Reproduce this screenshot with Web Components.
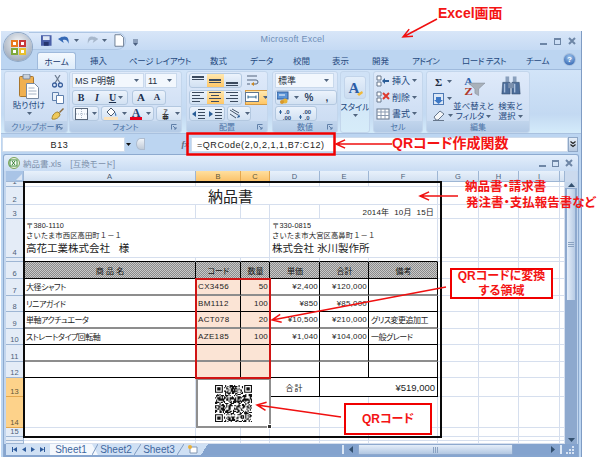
<!DOCTYPE html>
<html lang="ja">
<head>
<meta charset="utf-8">
<title>納品書</title>
<style>
  html, body { margin: 0; background: #fff; }
  body { width: 600px; height: 458px; overflow: hidden; position: relative; font-feature-settings: "palt";
         font-family: "Liberation Sans", "Noto Sans CJK JP", sans-serif; }
</style>
</head>
<body>
<xl-window>
  <xl-titlebar></xl-titlebar>
  <xl-tabs></xl-tabs>
  <xl-ribbon>
    <rb-group label="クリップボード" launcher style="width:64px">
      <rb-clip></rb-clip>
    </rb-group>
    <rb-group label="フォント" launcher style="width:113px;margin-left:1px">
      <rb-row><rb-combo w="72">MS P明朝</rb-combo><rb-combo w="32">11</rb-combo></rb-row>
      <rb-row>
        <rb-seg><rb-btn w="16" txt="b">B</rb-btn><rb-btn w="16" txt="i">I</rb-btn><rb-btn w="22" txt="u" caret>U</rb-btn></rb-seg>
        <rb-seg style="margin-left:4px"><rb-btn w="16" txt="a">A</rb-btn><rb-btn w="16" txt="a2">A</rb-btn></rb-seg>
      </rb-row>
      <rb-row>
        <rb-seg><rb-btn w="25" icon="border" caret></rb-btn></rb-seg>
        <rb-seg style="margin-left:2px"><rb-btn w="26" icon="fill" caret></rb-btn><rb-btn w="25" icon="fontcolor" caret></rb-btn></rb-seg>
        <rb-seg style="margin-left:2px"><rb-btn w="25" icon="ruby" caret></rb-btn></rb-seg>
      </rb-row>
    </rb-group>
    <rb-group label="配置" launcher style="width:82px;margin-left:4px">
      <rb-row>
        <rb-seg><rb-btn w="17" icon="vtop"></rb-btn><rb-btn w="17" icon="vmid" hot></rb-btn><rb-btn w="17" icon="vbot"></rb-btn></rb-seg>
        <rb-btn w="17" icon="wrap" style="margin-left:3px"></rb-btn>
      </rb-row>
      <rb-row>
        <rb-seg><rb-btn w="17" icon="left"></rb-btn><rb-btn w="17" icon="center" hot></rb-btn><rb-btn w="17" icon="right"></rb-btn></rb-seg>
        <rb-btn w="23" icon="merge" caret hot outlined style="margin-left:3px"></rb-btn>
      </rb-row>
      <rb-row>
        <rb-seg><rb-btn w="17" icon="outdent"></rb-btn><rb-btn w="17" icon="indent"></rb-btn></rb-seg>
        <rb-seg style="margin-left:2px"><rb-btn w="22" icon="orient" caret></rb-btn></rb-seg>
      </rb-row>
    </rb-group>
    <rb-group label="数値" launcher style="width:66px;margin-left:4px">
      <rb-row><rb-combo w="60">標準</rb-combo></rb-row>
      <rb-row><rb-seg><rb-btn w="24" icon="money" caret></rb-btn><rb-btn w="18" plain>%</rb-btn><rb-btn w="18" plain>,</rb-btn></rb-seg></rb-row>
      <rb-row><rb-seg><rb-btn w="20" icon="decup"></rb-btn><rb-btn w="20" icon="decdown"></rb-btn></rb-seg></rb-row>
    </rb-group>
    <rb-group label="" tall style="width:30px;margin-left:2px">
      <rb-large></rb-large>
    </rb-group>
    <rb-group label="セル" style="width:50px;margin-left:3px">
      <rb-row><rb-btn w="44" icon="insert" caret txtl>挿入</rb-btn></rb-row>
      <rb-row><rb-btn w="44" icon="remove" caret txtl>削除</rb-btn></rb-row>
      <rb-row><rb-btn w="44" icon="format" caret txtl>書式</rb-btn></rb-row>
    </rb-group>
    <rb-group label="編集" style="width:104px;margin-left:3px">
      <rb-edit></rb-edit>
    </rb-group>
  </xl-ribbon>
  <xl-formula></xl-formula>
  <xl-book></xl-book>
</xl-window>

<xl-notes>
  <xl-note x="438" y="5" size="14">Excel画面</xl-note>
  <xl-note x="392" y="135" size="14">QRコード作成関数</xl-note>
  <xl-note x="465" y="180" size="12.5">納品書・請求書</xl-note>
  <xl-note x="466" y="196" size="12.5">発注書・支払報告書など</xl-note>
  <xl-note x="450" y="268" w="103" h="31" size="12" box>QRコードに変換<br>する領域</xl-note>
  <xl-note x="344" y="403" w="88" h="32" size="12" box>QRコード</xl-note>
</xl-notes>

<script>
'use strict';

const rects = list => list.map(r => `<rect x="${r[0]}" y="${r[1]}" width="${r[2]}" height="${r[3]}"/>`).join('');

const hLines = (rows) => `<g fill="#3b4a5e">${rects(rows)}</g>`;

const ICONS = {
  vtop: [14, 12, hLines([[1,1,12,2],[1,4,12,1]])],
  vmid: [14, 12, hLines([[1,4,12,2],[1,7,12,1]])],
  vbot: [14, 12, hLines([[1,7,12,2],[1,10,12,1]])],
  left: [14, 12, hLines([[1,1,12,1],[1,4,8,1],[1,7,12,1],[1,10,8,1]])],
  center: [14, 12, hLines([[1,1,12,1],[3,4,8,1],[1,7,12,1],[3,10,8,1]])],
  right: [14, 12, hLines([[1,1,12,1],[5,4,8,1],[1,7,12,1],[5,10,8,1]])],
  wrap: [15, 13, `<path d="M2 2h10M2 6h9a2 2 0 0 1 0 4H8M2 10h3" fill="none" stroke="#55657c"/><path d="M9 8v4l-3-2z" fill="#c9851e"/>`],
  merge: [14, 12, `<rect x=".5" y="1.5" width="13" height="9" fill="#fff" stroke="#5f7590"/><path d="M3 6h8" stroke="#27628f"/><path d="M3 4.5v3M11 4.5v3" stroke="#27628f"/>`],
  outdent: [14, 12, hLines([[7,1,7,1],[7,4,7,1],[7,7,7,1],[7,10,7,1]]) + `<path d="M5 3v6L1 6z" fill="#2a5d97"/>`],
  indent: [14, 12, hLines([[7,1,7,1],[7,4,7,1],[7,7,7,1],[7,10,7,1]]) + `<path d="M1 3v6l4-3z" fill="#2a5d97"/>`],
  orient: [13, 12, `<path d="M2 2l8 5M2 6l6 4M4 1l7 4" stroke="#44546a" fill="none"/><path d="M9 10l3-1-1-3z" fill="#2a5d97"/>`],
  border: [13, 12, `<rect x=".5" y=".5" width="12" height="11" fill="#f8fbff" stroke="#59677a"/><path d="M6.5 1v10M1 6h11" stroke="#a9b6c6" stroke-dasharray="1 1"/>`],
  fill: [14, 13, `<path d="M3 5l4-4 4 4-4 4z" fill="#fff" stroke="#4b5a70"/><path d="M11 5c1 2 2 3 1 4-1 0-1-2-1-4z" fill="#2f6db0"/><rect x="0" y="10" width="14" height="3" fill="#fbe3bd"/>`],
  fontcolor: [12, 13, `<text x="6" y="9.5" text-anchor="middle" font-family="Liberation Serif" font-weight="700" font-size="12" fill="#1f3f75">A</text><rect x="0" y="10" width="12" height="3" fill="#e8001c"/>`],
  ruby: [11, 12, `<text x="5.5" y="4.5" text-anchor="middle" font-size="4.5" font-weight="700" fill="#333">ア</text><text x="5.5" y="11.5" text-anchor="middle" font-size="7" font-weight="700" fill="#222">亜</text>`],
  money: [13, 13, `<rect x="0" y="1" width="11" height="7" fill="#5c94d6" stroke="#335f9b"/><path d="M2 4h6" stroke="#fff"/><circle cx="8" cy="10" r="2.5" fill="#e7b43a"/><circle cx="5" cy="11" r="2" fill="#d9982a"/>`],
  decup: [15, 12, `<text x="9" y="6" font-size="6" font-weight="700" fill="#2d4a75" text-anchor="middle">.0</text><text x="9" y="12" font-size="6" font-weight="700" fill="#2d4a75" text-anchor="middle">.00</text><path d="M1 4h3M2.5 2v4" stroke="#2a5d97"/>`],
  decdown: [15, 12, `<text x="9" y="6" font-size="6" font-weight="700" fill="#2d4a75" text-anchor="middle">.00</text><text x="9" y="12" font-size="6" font-weight="700" fill="#2d4a75" text-anchor="middle">.0</text><path d="M1 9h3M2.5 7v4" stroke="#2a5d97"/>`],
  insert: [14, 12, `<path d="M1 1h4v4H1zM1 7h4v4H1z" fill="#fff" stroke="#66768c"/><path d="M7 6h6" stroke="#2a5d97" stroke-width="2"/><path d="M9 3l-3 3 3 3z" fill="#2a5d97"/>`],
  remove: [14, 12, `<path d="M1 1h4v4H1zM1 7h4v4H1z" fill="#fff" stroke="#66768c"/><path d="M7 2l6 6M13 2l-6 6" stroke="#dd3a2e" stroke-width="2"/>`],
  format: [14, 12, `<rect x="1" y="1" width="12" height="10" fill="#fff" stroke="#66768c"/><path d="M1 4h12M1 7.5h12M5 1v10M9 1v10" stroke="#8b9ab0"/>`]
};

function iconSvg(name) {
  const ic = ICONS[name];
  return `<svg width="${ic[0]}" height="${ic[1]}" viewBox="0 0 ${ic[0]} ${ic[1]}" style="display:block;flex:none">${ic[2]}</svg>`;
}

const CARET = `<svg width="5" height="3" viewBox="0 0 5 3" style="flex:none;display:block"><path d="M0 0h5L2.5 3z" fill="#51657f"/></svg>`;

class XlWindow extends HTMLElement {
    constructor() {
        super();
        this.attachShadow({mode: 'open'});
        this.shadowRoot.innerHTML = `
        <style>
        :host { display: block; width: 580px; height: 426px; margin: 31px 0 0 1px;
                background: #bcd5f1; border-right: 1px solid #7f9cc4; color: #15396e; }
        </style>
        <slot></slot>`;
    }
}

class XlTitlebar extends HTMLElement {
    constructor() {
        super();
        this.attachShadow({mode: 'open'});
        this.shadowRoot.innerHTML = `
        <style>
        :host { display: flex; align-items: center; height: 19px; position: relative;
                background: linear-gradient(#d8e6f8, #c5daf4); }
        .orb { position: absolute; left: 3px; top: 2px; width: 28px; height: 28px; border-radius: 50%;
               background: radial-gradient(circle at 50% 35%, #f5f7fa, #aab4c2 70%, #7b8797);
               box-shadow: 0 0 0 1px #8ea6c4; display: flex; align-items: center; justify-content: center; z-index: 2; }
        .qat { margin-left: 28px; width: 97px; height: 18px; display: flex; align-items: center; padding-left: 12px; box-sizing: border-box;
               gap: 4px; background: linear-gradient(#dfeafa, #c7dbf4); border: 1px solid #aec6e4; border-left: 0; border-radius: 0 9px 9px 0; }
        .more { margin-left: 7px; }
        .title { position: absolute; left: 0; right: 0; top: 3px; text-align: center; font-size: 9px; color: #6f8fb8; letter-spacing: .2px; padding-left: 3px; }
        </style>
        <div class="orb">
          <svg width="17" height="17" viewBox="0 0 17 17">
            <path d="M1 1h7v7H1z" fill="#e9791e"/><path d="M3 3h3v3H3z" fill="#fff"/>
            <path d="M9 1h7v7H9z" fill="#c8383a"/><path d="M1 9h7v7H1z" fill="#7fa93a"/><path d="M9 9h7v7H9z" fill="#e8c02e"/>
            <path d="M3 11h3v3H3zM11 3h3v3h-3zM11 11h3v3h-3z" fill="#fff"/>
          </svg>
        </div>
        <div class="qat">
          <svg width="11" height="11" viewBox="0 0 11 11"><rect width="11" height="11" fill="#4a5fa8"/><rect x="2" y="1" width="7" height="4" fill="#dfe7f5"/><rect x="3" y="7" width="5" height="4" fill="#26366f"/></svg>
          <svg width="13" height="11" viewBox="0 0 13 11" style="margin-left:2px"><path d="M4 2c5-2 8 1 7 7-1-4-3-5-6-4l1 3-6-4 5-3z" fill="#3569b5"/></svg>
          ${CARET}
          <svg width="13" height="11" viewBox="0 0 13 11" style="margin-left:3px"><path d="M9 2C4 0 1 3 2 9c1-4 3-5 6-4L7 8l6-4-5-3z" fill="#a7b7cb"/></svg>
          ${CARET}
          <svg width="11" height="13" viewBox="0 0 11 13" style="margin-left:3px"><path d="M1 .5h6l3 3v9H1z" fill="#fff" stroke="#6d7c92"/></svg>
        </div>
        <div class="more"><svg width="5" height="7" viewBox="0 0 5 7"><path d="M0 1h5M0 3h5" stroke="#4a5f80"/><path d="M0 4h5L2.5 7z" fill="#4a5f80"/></svg></div>
        <div class="title">Microsoft Excel</div>
        <xl-controls></xl-controls>`;
    }
}

class XlControls extends HTMLElement {
    constructor() {
        super();
        this.attachShadow({mode: 'open'});
        this.shadowRoot.innerHTML = `
        <style>:host { display: flex; gap: 7px; padding-right: 5px; margin-left: auto; align-items: center; }</style>
        <svg width="7" height="8" viewBox="0 0 7 8"><rect y="6" width="7" height="2" fill="#6e86a6"/></svg>
        <svg width="7" height="8" viewBox="0 0 7 8"><rect x=".5" y="1.5" width="6" height="6" fill="none" stroke="#6e86a6"/><rect y="1" width="7" height="2" fill="#6e86a6"/></svg>
        <svg width="8" height="8" viewBox="0 0 8 8"><path d="M1 1l6 6M7 1L1 7" stroke="#6e86a6" stroke-width="2"/></svg>`;
    }
}

class XlTabs extends HTMLElement {
    constructor() {
        super();
        this.attachShadow({mode: 'open'});
        // name, column width up to the next tab, letter spacing
        const names = [['挿入', 39, 0], ['ページ レイアウト', 81, -.3], ['数式', 40, 0], ['データ', 43, -.2], ['校閲', 39, 0],
                       ['表示', 40, 0], ['開発', 40, 0], ['アドイン', 50, -.6], ['ロード テスト', 64, -.5], ['チーム', 24, -.2]];
        this.shadowRoot.innerHTML = `
        <style>
        :host { display: flex; height: 19px; align-items: center; box-sizing: border-box; padding-left: 36px;
                font-size: 8.5px; color: #25497e; background: #bcd5f1; }
        .on { width: 39px; height: 17px; margin-top: 2px; display: flex; align-items: center; justify-content: center;
              background: linear-gradient(#f4f9fe, #dcebfa); border: 1px solid #9fbadc; border-bottom: 0; border-radius: 3px 3px 0 0;
              box-sizing: border-box; color: #15396e; }
        .tabs { display: flex; margin-left: 14px; white-space: nowrap; }
        .help { position: absolute; left: 564px; width: 11px; height: 11px; border-radius: 50%; margin-top: -1px; color: #fff; text-align: center;
                font: 700 8px/11px "Liberation Sans", sans-serif; background: radial-gradient(circle at 50% 30%, #9cc4ee, #2659a8); box-shadow: 0 0 0 1px #a7bedb; }
        </style>
        <div class="on">ホーム</div>
        <div class="tabs">${names.map(n => `<span style="width:${n[1]}px;letter-spacing:${n[2]}px">${n[0]}</span>`).join('')}</div>
        <div class="help">?</div>`;
    }
}

class XlRibbon extends HTMLElement {
    constructor() {
        super();
        this.attachShadow({mode: 'open'});
        this.shadowRoot.innerHTML = `
        <style>
        :host { display: flex; height: 65px; box-sizing: border-box; padding: 1px 0 1px 3px;
                background: linear-gradient(#d2e4f8, #c3d9f2 70%, #d4ebfa); border-top: 1px solid #9fbadc; border-bottom: 1px solid #a9c1df; }
        </style>
        <slot></slot>`;
    }
}

class RbGroup extends HTMLElement {
    constructor() {
        super();
        this.attachShadow({mode: 'open'});
    }
    connectedCallback() {
        const launcher = this.hasAttribute('launcher') ? `<svg class="ln" width="6" height="6" viewBox="0 0 6 6"><path d="M.5 5.5v-5h5M2 2l3 3M3 5h2V3" fill="none" stroke="#5f7fa8"/></svg>` : '';
        this.shadowRoot.innerHTML = `
        <style>
        :host { display: flex; flex-direction: column; flex: none; box-sizing: border-box; height: 62px; border-radius: 3px;
                border: 1px solid #c3d6ec; background: linear-gradient(#dfeafa, #c8daf1); overflow: hidden; }
        :host([tall]) { background: linear-gradient(#cfe1f6, #d6ecf9); }
        .body { flex: 1; padding: 1px 2px 0; min-height: 0; }
        .lab { height: 11px; flex: none; display: flex; align-items: center; justify-content: center; position: relative; font-size: 8px;
               color: #4b72a6; background: linear-gradient(#c1d5ec, #b3cae6); }
        :host([tall]) .lab { background: none; }
        .ln { position: absolute; right: 4px; top: 3px; }
        </style>
        <div class="body"><slot></slot></div>
        <div class="lab">${this.getAttribute('label')}${launcher}</div>`;
    }
}

class RbRow extends HTMLElement {
    constructor() {
        super();
        this.attachShadow({mode: 'open'});
        this.shadowRoot.innerHTML = `
        <style>:host { display: flex; align-items: center; height: 15px; margin-bottom: 1.5px; }</style>
        <slot></slot>`;
    }
}

class RbSeg extends HTMLElement {
    constructor() {
        super();
        this.attachShadow({mode: 'open'});
        this.shadowRoot.innerHTML = `
        <style>
        :host { display: inline-flex; height: 15px; box-sizing: border-box; border: 1px solid #b3c8e0; border-radius: 3px;
                background: linear-gradient(#ecf3fc, #d2e1f2); }
        </style>
        <slot></slot>`;
    }
}

class RbCombo extends HTMLElement {
    constructor() {
        super();
        this.attachShadow({mode: 'open'});
    }
    connectedCallback() {
        this.shadowRoot.innerHTML = `
        <style>
        :host { display: inline-flex; align-items: center; justify-content: space-between; height: 15px; box-sizing: border-box;
                width: ${this.getAttribute('w')}px; margin-right: 1px; padding: 0 4px 0 2px; background: #f2f7fd; border: 1px solid #c9d9ec;
                font-size: 9px; color: #26303f; }
        </style>
        <span><slot></slot></span>${CARET}`;
    }
}

class RbBtn extends HTMLElement {
    constructor() {
        super();
        this.attachShadow({mode: 'open'});
    }
    connectedCallback() {
        const w = this.getAttribute('w');
        const txt = this.getAttribute('txt');
        const fontFor = {
            b: '700 10px "Liberation Serif"', i: 'italic 700 10px "Liberation Serif"', u: '700 10px "Liberation Serif"',
            a: '700 11px "Liberation Serif"', a2: '700 9px "Liberation Serif"'
        };
        this.shadowRoot.innerHTML = `
        <style>
        :host { display: inline-flex; align-items: center; justify-content: center; gap: 2px; flex: none; box-sizing: border-box;
                width: ${w}px; height: 100%; color: #1c2f4d; white-space: nowrap; font: ${fontFor[txt] || '8px "Liberation Sans", "Noto Sans CJK JP", sans-serif'}; }
        :host([hot]) { background: linear-gradient(#ffe8b0, #ffc766); }
        :host([outlined]) { border: 1px solid #d69b45; height: 15px; }
        :host([plain]) { font: 700 10px "Liberation Sans", sans-serif; color: #2c3f5c; }
        :host([txt="u"]) span { text-decoration: underline; }
        :host([txtl]) { justify-content: flex-start; color: #25497e; font-size: 9px; }
        </style>
        ${this.hasAttribute('icon') ? iconSvg(this.getAttribute('icon')) : ''}<span><slot></slot></span>${this.hasAttribute('caret') ? CARET : ''}`;
    }
}

class RbClip extends HTMLElement {
    constructor() {
        super();
        this.attachShadow({mode: 'open'});
        this.shadowRoot.innerHTML = `
        <style>
        :host { display: flex; height: 49px; font-size: 8px; color: #25497e; }
        .big { width: 44px; display: flex; flex-direction: column; align-items: center; }
        .side { display: flex; flex-direction: column; align-items: center; gap: 4px; padding-top: 2px; }
        .lab { font-size: 8.5px; line-height: 10px; margin-top: 1px; white-space: nowrap; }
        </style>
        <div class="big">
          <svg width="20" height="25" viewBox="0 0 20 25" style="margin-top:1px">
            <rect x=".5" y="2.5" width="14" height="20" rx="1" fill="#f0b050" stroke="#a9762c"/>
            <rect x="4" y="0" width="7" height="5" rx="1" fill="#c7d0db" stroke="#77859a"/>
            <path d="M7.5 9.5h8l4 4v11h-12z" fill="#fff" stroke="#788aa2"/>
            <path d="M9.5 14h6M9.5 17h8M9.5 20h8" stroke="#a5b3c5"/>
          </svg>
          <div class="lab">貼り付け</div>
          <div style="margin-top:2px">${CARET}</div>
        </div>
        <div class="side">
          <svg width="11" height="13" viewBox="0 0 11 13"><path d="M3 0l5 8M8 0L3 8" stroke="#6d7b8f" stroke-width="1.2"/><circle cx="2.5" cy="10" r="2" fill="none" stroke="#3a5f9c" stroke-width="1.3"/><circle cx="8.5" cy="10" r="2" fill="none" stroke="#3a5f9c" stroke-width="1.3"/></svg>
          <svg width="12" height="12" viewBox="0 0 12 12"><path d="M.5.5h6v8h-6z" fill="#e6eef8" stroke="#5f80ad"/><path d="M4.5 3.5h7v8h-7z" fill="#fff" stroke="#5f80ad"/></svg>
          <svg width="13" height="12" viewBox="0 0 13 12"><path d="M8 4l4-4 1 1-4 4z" fill="#8a6a3c"/><path d="M1 11c0-4 3-7 6-7l2 2c0 3-4 6-8 5z" fill="#eec95b" stroke="#a58531"/></svg>
        </div>`;
    }
}

class RbLarge extends HTMLElement {
    constructor() {
        super();
        this.attachShadow({mode: 'open'});
        this.shadowRoot.innerHTML = `
        <style>
        :host { display: flex; flex-direction: column; align-items: center; font-size: 9px; color: #25497e; white-space: nowrap; }
        .ic { width: 22px; height: 23px; margin-top: 3px; border-radius: 3px; border: 1px solid #c2d4ea; display: flex; align-items: center; justify-content: center;
              background: linear-gradient(#e5effa, #cbdcf0); box-sizing: border-box; }
        .t { margin-top: 3px; line-height: 10px; font-size: 8.5px; letter-spacing: -.2px; }
        </style>
        <div class="ic">
          <svg width="16" height="16" viewBox="0 0 16 16"><text x="7" y="13" text-anchor="middle" font-family="Liberation Serif" font-weight="700" font-size="15" fill="#2c5da6">A</text><path d="M10 14l5-3 1 2-4 3z" fill="#f0b93a"/></svg>
        </div>
        <div class="t">スタイル</div>
        <div style="margin-top:2px">${CARET}</div>`;
    }
}

class RbEdit extends HTMLElement {
    constructor() {
        super();
        this.attachShadow({mode: 'open'});
        this.shadowRoot.innerHTML = `
        <style>
        :host { display: flex; height: 49px; font-size: 8.5px; color: #25497e; }
        .col { width: 26px; padding-left: 4px; display: flex; flex-direction: column; gap: 4px; padding-top: 2px; box-sizing: border-box; flex: none; }
        .r { display: flex; align-items: center; gap: 3px; height: 13px; }
        .big { width: 37px; flex: none; display: flex; flex-direction: column; align-items: center; line-height: 10px; white-space: nowrap; text-align: center; }
        .line1 { margin-top: 4px; }
        .line2 { display: flex; align-items: center; gap: 2px; }
        svg { display: block; flex: none; }
        </style>
        <div class="col">
          <div class="r"><span style="font:700 11px 'Liberation Serif',serif;color:#1d2c44;width:11px;text-align:center">Σ</span>${CARET}</div>
          <div class="r"><svg width="11" height="12" viewBox="0 0 11 12"><rect x=".5" y=".5" width="10" height="11" fill="#dbe7f6" stroke="#4d79b4"/><path d="M3 4h5v3h2l-4.5 4L1 7h2z" fill="#3c78c6"/></svg>${CARET}</div>
          <div class="r"><svg width="12" height="11" viewBox="0 0 12 11"><path d="M1 7l6-6 4 3-6 6H3z" fill="#f4f6f9" stroke="#67778c"/><path d="M0 10.5h11" stroke="#67778c"/></svg>${CARET}</div>
        </div>
        <div class="big">
          <svg width="22" height="22" viewBox="0 0 24 30" preserveAspectRatio="none" style="margin-top:2px">
            <text x="6" y="13" text-anchor="middle" font-family="Liberation Serif" font-weight="700" font-size="13" fill="#2d63ad">A</text>
            <text x="6" y="27" text-anchor="middle" font-family="Liberation Serif" font-weight="700" font-size="14" fill="#b13a2c">Z</text>
            <path d="M6 11h18l-7 8v9l-4-3v-6z" fill="#a9b1ba" stroke="#7c8794" stroke-width=".6"/>
          </svg>
          <div class="line1">並べ替えと</div>
          <div class="line2">フィルタ${CARET}</div>
        </div>
        <div class="big">
          <svg width="22" height="22" viewBox="0 0 24 30" preserveAspectRatio="none" style="margin-top:2px">
            <rect x="6" y="2" width="4" height="8" fill="#8aa0bd"/><rect x="14" y="2" width="4" height="8" fill="#8aa0bd"/>
            <path d="M3 10h8v16H2zM13 10h8l1 16h-9z" fill="#4c6d9a" stroke="#2f4767" stroke-width=".6"/>
            <rect x="9" y="11" width="6" height="7" fill="#7b90ad"/><path d="M5 12v12M16 12v12" stroke="#a9bfdc" stroke-width="1.5"/>
          </svg>
          <div class="line1">検索と</div>
          <div class="line2">選択${CARET}</div>
        </div>`;
    }
}

class XlFormula extends HTMLElement {
    constructor() {
        super();
        this.attachShadow({mode: 'open'});
        this.shadowRoot.innerHTML = `
        <style>
        :host { display: flex; align-items: stretch; height: 15px; margin: 3px 0 2px 1px; font-size: 9px; color: #222; }
        .name { width: 123px; background: #fff; border: 1px solid #cfdcec; box-sizing: border-box; display: flex; align-items: center; justify-content: center; letter-spacing: .6px; padding-right: 8px; }
        .drop { width: 6px; display: flex; align-items: center; padding-left: 1px; margin-right: 2px; }
        .round { width: 9px; height: 12px; margin: 1px 0 0 2px; border-radius: 50% 0 0 50%; background: linear-gradient(#f0f4f9, #c1cbd8); border: 1px solid #aebccf; box-sizing: border-box; }
        .fx { width: 46px; text-align: right; padding-right: 2px; box-sizing: border-box; font: italic 700 9px/14px "Liberation Serif", serif; color: #5d6c80; }
        .input { flex: 1; background: #fff; border: 1px solid #cfdcec; box-sizing: border-box; display: flex; align-items: center; padding-left: 5px; letter-spacing: .55px; white-space: nowrap; }
        .exp { width: 10px; margin-right: 3px; border: 1px solid #8fa7c6; box-sizing: border-box; background: linear-gradient(#e6eef8, #b7c9e0); display: flex; align-items: center; justify-content: center; }
        </style>
        <div class="name">B13</div>
        <div class="drop"><svg width="5" height="3" viewBox="0 0 5 3"><path d="M0 0h5L2.5 3z" fill="#111"/></svg></div>
        <div class="round"></div>
        <div class="fx">fx</div>
        <div class="input">=QRCode(2,0,2,1,1,B7:C12)</div>
        <div class="exp"><svg width="6" height="8" viewBox="0 0 6 8"><path d="M.5 .5l2.5 2 2.5-2M.5 3.5l2.5 2 2.5-2" fill="none" stroke="#222" stroke-width="1.2"/></svg></div>`;
    }
}

class XlBook extends HTMLElement {
    constructor() {
        super();
        this.attachShadow({mode: 'open'});
        this.shadowRoot.innerHTML = `
        <style>
        :host { display: block; margin-left: 2px; width: 576px; height: 303px; box-sizing: border-box; border: 1px solid #8daacf; border-bottom: 0;
                border-radius: 3px 3px 0 0; background: #86a5cf; overflow: hidden; }
        .top { display: flex; align-items: center; height: 16px; padding-left: 4px; background: linear-gradient(#e3eefb, #c9dcf3); font-size: 8.5px; color: #7d90ab; gap: 3px; }
        .nm { display: flex; gap: 9px; white-space: nowrap; }
        .main { display: flex; padding-left: 2px; background: #c3d6ee; }
        .bottom { display: flex; height: 13px; padding-left: 2px; }
        </style>
        <div class="top">
          <svg width="12" height="12" viewBox="0 0 12 12"><circle cx="6" cy="6" r="5.5" fill="#e9f3e0" stroke="#7da25c"/><rect x="2" y="3" width="7" height="6" fill="#fff" stroke="#3d8a3b"/><path d="M4 4l3 4M7 4L4 8" stroke="#2f7a2d"/></svg>
          <div class="nm"><span>納品書.xls</span><span>[互換モード]</span></div>
          <xl-controls style="padding-right:5px;gap:6px"></xl-controls>
        </div>
        <div class="main"><xl-sheet></xl-sheet><xl-vscroll></xl-vscroll></div>
        <div class="bottom"><xl-sheettabs></xl-sheettabs><xl-hscroll></xl-hscroll></div>`;
    }
}

const ROW_H = [5, 18, 14, 39, 4, 17, 17, 16, 17, 16, 17, 16, 19, 31, 9, 4, 3];
const COL_W = [172, 45, 29, 50, 49, 69, 41, 40, 41, 5];
const GRID = '#d6dfee';

// placed cells: [row, col, rowspan, colspan, text, class]
const PLACED = [
    [2, 1, 1, 6, '納品書', 'ttl'],
    [3, 5, 1, 2, '2014年&nbsp; 10月&nbsp; 15日', 'date'],
    [4, 1, 1, 3, '<div class="addr">〒380-1110</div><div class="addr">さいたま市西区高田町１－１</div><div class="nm">高花工業株式会社&nbsp;&nbsp;&nbsp;様</div>', 'adr'],
    [4, 4, 1, 3, '<div class="addr">〒330-0815</div><div class="addr">さいたま市大宮区高鼻町１－１</div><div class="nm">株式会社 氷川製作所</div>', 'adr'],
    [13, 1, 2, 1, '', 'b'],
    [13, 2, 2, 2, '<xl-qr></xl-qr>', 'qr'],
    [13, 4, 1, 1, '合計', 'tot'],
    [13, 5, 1, 2, '¥519,000', 'sum']
];

const TABLE = [
    ['商 品 名', 'コード', '数量', '単価', '合計', '備考'],
    ['大径シャフト', 'CX3456', '50', '¥2,400', '¥120,000', ''],
    ['リニアガイド', 'BM1112', '100', '¥850', '¥85,000', ''],
    ['単軸アクチュエータ', 'ACT078', '20', '¥10,500', '¥210,000', 'グリス変更追加工'],
    ['ストレートタイプ回転軸', 'AZE185', '100', '¥1,040', '¥104,000', '一般グレード'],
    ['', '', '', '', '', ''],
    ['', '', '', '', '', '']
];

class XlSheet extends HTMLElement {
    constructor() {
        super();
        this.attachShadow({mode: 'open'});
    }
    connectedCallback() {
        let html = `<div class="corner"><svg width="6" height="6" viewBox="0 0 6 6" style="position:absolute;right:1px;bottom:1px"><path d="M6 0v6H0z" fill="#dbe6f4"/></svg></div>`;
        const letters = 'ABCDEFGHI ';
        COL_W.forEach((w, i) => {
            const sel = i === 1 || i === 2 ? ' sel' : '';
            html += `<div class="ch${sel}" style="grid-row:1;grid-column:${i + 2}">${letters[i]}</div>`;
        });
        ROW_H.forEach((h, i) => {
            const r = i + 1;
            const sel = r === 13 || r === 14 ? ' sel' : '';
            html += `<div class="rh${sel}" style="grid-row:${r + 1};grid-column:1">${r < 16 && h > 4 ? r : ''}</div>`;
        });
        const taken = {};
        PLACED.forEach(p => {
            for (let y = 0; y < p[2]; y++) for (let x = 0; x < p[3]; x++) taken[(p[0] + y) + '_' + (p[1] + x)] = true;
            html += `<div class="c ${p[5]}" style="grid-row:${p[0] + 1} / span ${p[2]};grid-column:${p[1] + 1} / span ${p[3]}">${p[4]}</div>`;
        });
        TABLE.forEach((line, y) => {
            const r = y + 6;
            const rowCls = r === 6 ? 'head' : (r === 7 || r === 9 || r === 11 ? 'soft' : 'hard');
            line.forEach((t, x) => {
                const c = x + 1;
                taken[r + '_' + c] = true;
                let cls = 'c t ' + rowCls;
                if (x === 1 || x === 2) cls += r > 6 ? ' pick' : '';
                if (x === 2) cls += r > 6 ? ' ar' : '';
                if (x === 3 || x === 4) cls += r > 6 ? ' ar' : '';
                if (x === 1 && r > 6) cls += ' code';
                if ((x === 0 || x === 5) && r > 6) cls += ' txt';
                html += `<div class="${cls}" style="grid-row:${r + 1};grid-column:${c + 1}">${t}</div>`;
            });
        });
        ROW_H.forEach((h, i) => {
            COL_W.forEach((w, j) => {
                if (!taken[(i + 1) + '_' + (j + 1)]) {
                    const line = i + 1 === 5 && j < 6 ? ' rule' : '';
                    html += `<div class="c${line}" style="grid-row:${i + 2};grid-column:${j + 2}"></div>`;
                }
            });
        });
        html += `<div class="region"></div>`;
        this.shadowRoot.innerHTML = `
        <style>
        :host { display: grid; flex: none; width: 559px; background: #fff;
                grid-template-columns: 18px ${COL_W.map(w => w + 'px').join(' ')};
                grid-template-rows: 11px ${ROW_H.map(h => h + 'px').join(' ')};
                font-family: "Liberation Sans", "Noto Sans CJK JP", sans-serif; color: #1c1c1c; }
        .corner { grid-row: 1; grid-column: 1; background: #a9c4e6; position: relative; border-right: 1px solid #9eb6d4; border-bottom: 1px solid #9eb6d4; box-sizing: border-box; }
        .ch, .rh { box-sizing: border-box; font-size: 7.5px; color: #4d5f78; background: linear-gradient(#e8f1fb, #d2e0f1); border-right: 1px solid #9eb6d4; border-bottom: 1px solid #9eb6d4; overflow: hidden; }
        .ch { display: flex; align-items: center; justify-content: center; }
        .rh { display: flex; align-items: flex-end; justify-content: center; line-height: 9px; background: #e4ecf7; }
        .sel { background: linear-gradient(#ffdf9e, #fbc36b); color: #5f5636; border-color: #e3a74e; }
        .rh.sel { background: #fdd28a; }
        .c { box-sizing: border-box; min-width: 0; border-right: 1px solid ${GRID}; border-bottom: 1px solid ${GRID}; overflow: hidden; }
        .c.rule { border-bottom: 1px solid #000; }
        .t { display: flex; align-items: center; font-size: 8px; padding: 0 1px 0 2px; white-space: nowrap; border-right: 1px solid #000; }
        .head { justify-content: center; border-bottom: 1px solid #000; color: #111; background: conic-gradient(#8b8b8b 25%, #c9c9c9 0 50%, #8b8b8b 0 75%, #c9c9c9 0) 0 0 / 2px 2px; }
        .soft { border-bottom: 2px solid #8d8d8d; }
        .hard { border-bottom: 1px solid #000; }
        .ar { justify-content: flex-end; letter-spacing: .2px; }
        .pick { background: #fbe4d5; }
        .code { letter-spacing: .35px; }
        .txt { letter-spacing: -.5px; }
        .ttl { display: flex; align-items: center; justify-content: center; font-size: 15px; color: #222; font-feature-settings: normal; }
        .date { display: flex; align-items: center; justify-content: flex-end; padding-right: 3px; font-size: 8px; letter-spacing: .2px; white-space: nowrap; }
        .adr { display: flex; flex-direction: column; justify-content: flex-end; padding: 0 0 2px 2px; white-space: nowrap; font-feature-settings: normal; }
        .addr { font-size: 7.3px; line-height: 10px; letter-spacing: .1px; }
        .nm { font-size: 10.5px; line-height: 14px; }
        .b { border-bottom: 1px solid ${GRID}; }
        .qr { position: relative; display: flex; align-items: center; justify-content: center; border: 2px solid #8f8f8f; margin-right: -1px; overflow: visible; }
        .qr::after { content: ""; position: absolute; right: -3px; bottom: -3px; width: 3px; height: 3px; background: #333; border: 1px solid #fff; }
        .tot, .sum { display: flex; align-items: center; font-size: 8px; border-bottom: 1px solid #000; border-right: 1px solid #000; }
        .tot { justify-content: center; letter-spacing: 1px; padding-left: 0; }
        .sum { justify-content: flex-end; padding-right: 2px; font-size: 9.5px; }
        .region { grid-column: 3 / span 2; grid-row: 8 / span 6; border: 2px solid #d01414; margin: -1px; pointer-events: none; z-index: 2; }
        </style>
        ${html}`;
    }
}

class XlQr extends HTMLElement {
    constructor() {
        super();
        this.attachShadow({mode: 'open'});
        const n = 33;
        const on = [];
        const finder = (a, b, x, y) => {
            const dx = x - a, dy = y - b;
            if (dx < -1 || dy < -1 || dx > 7 || dy > 7) return null;
            if (dx < 0 || dy < 0 || dx > 6 || dy > 6) return 0;
            if (dx === 0 || dy === 0 || dx === 6 || dy === 6) return 1;
            return dx >= 2 && dx <= 4 && dy >= 2 && dy <= 4 ? 1 : 0;
        };
        let seed = 77;
        for (let y = 0; y < n; y++) {
            for (let x = 0; x < n; x++) {
                seed = (seed * 1103515245 + 12345) & 0x7fffffff;
                let v = (seed >> 16) & 1;
                [[0, 0], [n - 7, 0], [0, n - 7]].forEach(f => {
                    const m = finder(f[0], f[1], x, y);
                    if (m !== null) v = m;
                });
                if (v) on.push(`M${x} ${y}h1v1h-1z`);
            }
        }
        this.shadowRoot.innerHTML = `
        <style>:host { display: block; width: 37px; height: 37px; }</style>
        <svg width="37" height="37" viewBox="0 0 33 33" style="display:block"><path d="${on.join('')}" fill="#111"/></svg>`;
    }
}

class XlVscroll extends HTMLElement {
    constructor() {
        super();
        this.attachShadow({mode: 'open'});
        this.shadowRoot.innerHTML = `
        <style>
        :host { display: flex; flex-direction: column; width: 12px; flex: none; box-sizing: border-box; align-items: stretch; background: #8ea9ce; }
        .head { height: 11px; background: #cbdaee; }
        .arrow { height: 6px; display: flex; justify-content: center; align-items: center; background: #c4d5ea; }
        .thumb { height: 113px; margin: 0 1px; background: linear-gradient(90deg, #e5eef9, #b7cbe4); border: 1px solid #8ea9ce; box-sizing: border-box; display: flex; align-items: center; justify-content: center; }
        .rest { flex: 1; }
        .tail { height: 9px; display: flex; justify-content: center; align-items: center; }
        </style>
        <div class="head"></div>
        <div class="arrow"><svg width="7" height="4" viewBox="0 0 7 4"><path d="M0 4h7L3.5 0z" fill="#33506f"/></svg></div>
        <div class="thumb"><svg width="6" height="5" viewBox="0 0 6 5"><path d="M0 .5h6M0 2.5h6M0 4.5h6" stroke="#8aa2c1"/></svg></div>
        <div class="rest"></div>
        <div class="tail"><svg width="7" height="4" viewBox="0 0 7 4"><path d="M0 0h7L3.5 4z" fill="#33506f"/></svg></div>`;
    }
}

class XlSheettabs extends HTMLElement {
    constructor() {
        super();
        this.attachShadow({mode: 'open'});
        const slope = (w, white) => `<svg width="${w}" height="11" viewBox="0 0 ${w} 11" style="flex:none;display:block">${white ? `<path d="M0 0L${w} 11H0z" fill="#f4f8fd"/>` : ''}<path d="M0 11L${w} 0" stroke="#7f9ac0" fill="none"/></svg>`;
        this.shadowRoot.innerHTML = `
        <style>
        :host { display: flex; width: 336px; flex: none; height: 11px; font-size: 10px; color: #3f679f; background: #84a3ce; align-items: stretch; }
        .nav { width: 44px; display: flex; align-items: center; justify-content: space-around; background: #cfe0f4; padding: 0 3px; box-sizing: border-box; flex: none; }
        .tabs { display: flex; background: #cfe0f4; flex: none; }
        .tab { display: flex; align-items: center; justify-content: center; box-sizing: border-box; height: 11px; width: 36px; line-height: 10px; }
        .tab.on { background: #f4f8fd; width: 42px; }
        .new { width: 17px; }
        .end { background: linear-gradient(to bottom right, #cfe0f4 50%, #84a3ce 50%); width: 7px; flex: none; }
        </style>
        <div class="nav">
          <svg width="5" height="5" viewBox="0 0 5 5"><path d="M0 0h1v5H0zM5 0v5L1 2.5z" fill="#2e5b9c"/></svg>
          <svg width="4" height="5" viewBox="0 0 4 5"><path d="M4 0v5L0 2.5z" fill="#2e5b9c"/></svg>
          <svg width="4" height="5" viewBox="0 0 4 5"><path d="M0 0v5l4-2.5z" fill="#2e5b9c"/></svg>
          <svg width="5" height="5" viewBox="0 0 5 5"><path d="M4 0h1v5H4zM0 0v5l4-2.5z" fill="#2e5b9c"/></svg>
        </div>
        <div class="tabs">
          <div class="tab on">Sheet1</div>${slope(6, true)}
          <div class="tab">Sheet2</div>${slope(7)}
          <div class="tab">Sheet3</div>${slope(7)}
          <div class="tab new"><svg width="11" height="9" viewBox="0 0 11 9"><path d="M3 2h7v6H3z" fill="#fff" stroke="#8296b1"/><circle cx="3" cy="2" r="2" fill="#e9b13b"/></svg></div>
        </div>
        <div class="end"></div>`;
    }
}

class XlHscroll extends HTMLElement {
    constructor() {
        super();
        this.attachShadow({mode: 'open'});
        this.shadowRoot.innerHTML = `
        <style>
        :host { display: flex; flex: 1; align-items: center; height: 11px; background: #84a3ce; }
        .split { width: 2px; height: 9px; background: #dce7f5; margin-right: 5px; }
        .thumb { width: 155px; height: 11px; margin-left: 5px; box-sizing: border-box; background: linear-gradient(#e5eef9, #b2c7e2); border: 1px solid #8ea9ce; border-radius: 1px;
                 display: flex; align-items: center; justify-content: center; }
        .end { margin-left: 38px; }
        .size { margin-left: auto; margin-right: 4px; }
        </style>
        <div class="split"></div>
        <svg width="4" height="7" viewBox="0 0 4 7"><path d="M4 0v7L0 3.5z" fill="#33506f"/></svg>
        <div class="thumb"><svg width="5" height="6" viewBox="0 0 5 6"><path d="M.5 0v6M2.5 0v6M4.5 0v6" stroke="#8aa2c1"/></svg></div>
        <svg class="end" width="4" height="7" viewBox="0 0 4 7"><path d="M0 0v7l4-3.5z" fill="#33506f"/></svg>
        <div class="split" style="margin:0 0 0 5px"></div>
        <svg class="size" width="8" height="8" viewBox="0 0 8 8"><path d="M6 0h2v2H6zM3 3h2v2H3zM6 3h2v2H6zM0 6h2v2H0zM3 6h2v2H3zM6 6h2v2H6z" fill="#d7e3f3"/></svg>`;
    }
}

class XlNotes extends HTMLElement {
    constructor() {
        super();
        this.attachShadow({mode: 'open'});
        const arrow = (x1, y1, x2, y2) => {
            const a = Math.atan2(y1 - y2, x1 - x2);
            const p = (d, s) => `${(x2 + Math.cos(a + s) * d).toFixed(1)} ${(y2 + Math.sin(a + s) * d).toFixed(1)}`;
            return `<path d="M${x1} ${y1}L${x2} ${y2}M${p(10, .42)}L${x2} ${y2}L${p(10, -.42)}"/>`;
        };
        this.shadowRoot.innerHTML = `
        <style>
        :host { position: absolute; left: 0; top: 0; width: 600px; height: 458px; pointer-events: none; }
        svg { position: absolute; left: 0; top: 0; }
        </style>
        <svg width="600" height="458" viewBox="0 0 600 458">
          <rect x="24" y="182" width="417" height="255" fill="none" stroke="#0a0a0a" stroke-width="2"/>
          <rect x="187.5" y="133.5" width="147" height="21" fill="none" stroke="#f00000" stroke-width="2.5"/>
          <g fill="none" stroke="#f01010" stroke-width="1.5">
            ${arrow(437, 19, 403, 37)}
            ${arrow(392, 144, 336, 144)}
            ${arrow(458, 196, 420, 196)}
            ${arrow(446, 287, 272, 320)}
            ${arrow(341, 417, 257, 405)}
          </g>
        </svg>
        <slot></slot>`;
    }
}

class XlNote extends HTMLElement {
    constructor() {
        super();
        this.attachShadow({mode: 'open'});
    }
    connectedCallback() {
        const w = this.getAttribute('w');
        const h = this.getAttribute('h');
        this.shadowRoot.innerHTML = `
        <style>
        :host { position: absolute; left: ${this.getAttribute('x')}px; top: ${this.getAttribute('y')}px;
                ${w ? `width:${w}px;height:${h}px;` : ''}
                font: 700 ${this.getAttribute('size')}px/1.25 "Liberation Sans", "Noto Sans CJK JP", sans-serif; font-feature-settings: "palt";
                color: #f41414; white-space: nowrap; box-sizing: border-box; }
        :host([box]) { display: flex; align-items: center; justify-content: center; text-align: center; background: #fff; border: 2px solid #f00000; }
        </style>
        <div><slot></slot></div>`;
    }
}

window.customElements.define('xl-window', XlWindow);
window.customElements.define('xl-titlebar', XlTitlebar);
window.customElements.define('xl-controls', XlControls);
window.customElements.define('xl-tabs', XlTabs);
window.customElements.define('xl-ribbon', XlRibbon);
window.customElements.define('rb-group', RbGroup);
window.customElements.define('rb-row', RbRow);
window.customElements.define('rb-seg', RbSeg);
window.customElements.define('rb-combo', RbCombo);
window.customElements.define('rb-btn', RbBtn);
window.customElements.define('rb-clip', RbClip);
window.customElements.define('rb-large', RbLarge);
window.customElements.define('rb-edit', RbEdit);
window.customElements.define('xl-formula', XlFormula);
window.customElements.define('xl-book', XlBook);
window.customElements.define('xl-sheet', XlSheet);
window.customElements.define('xl-qr', XlQr);
window.customElements.define('xl-vscroll', XlVscroll);
window.customElements.define('xl-sheettabs', XlSheettabs);
window.customElements.define('xl-hscroll', XlHscroll);
window.customElements.define('xl-notes', XlNotes);
window.customElements.define('xl-note', XlNote);
</script>
</body>
</html>
